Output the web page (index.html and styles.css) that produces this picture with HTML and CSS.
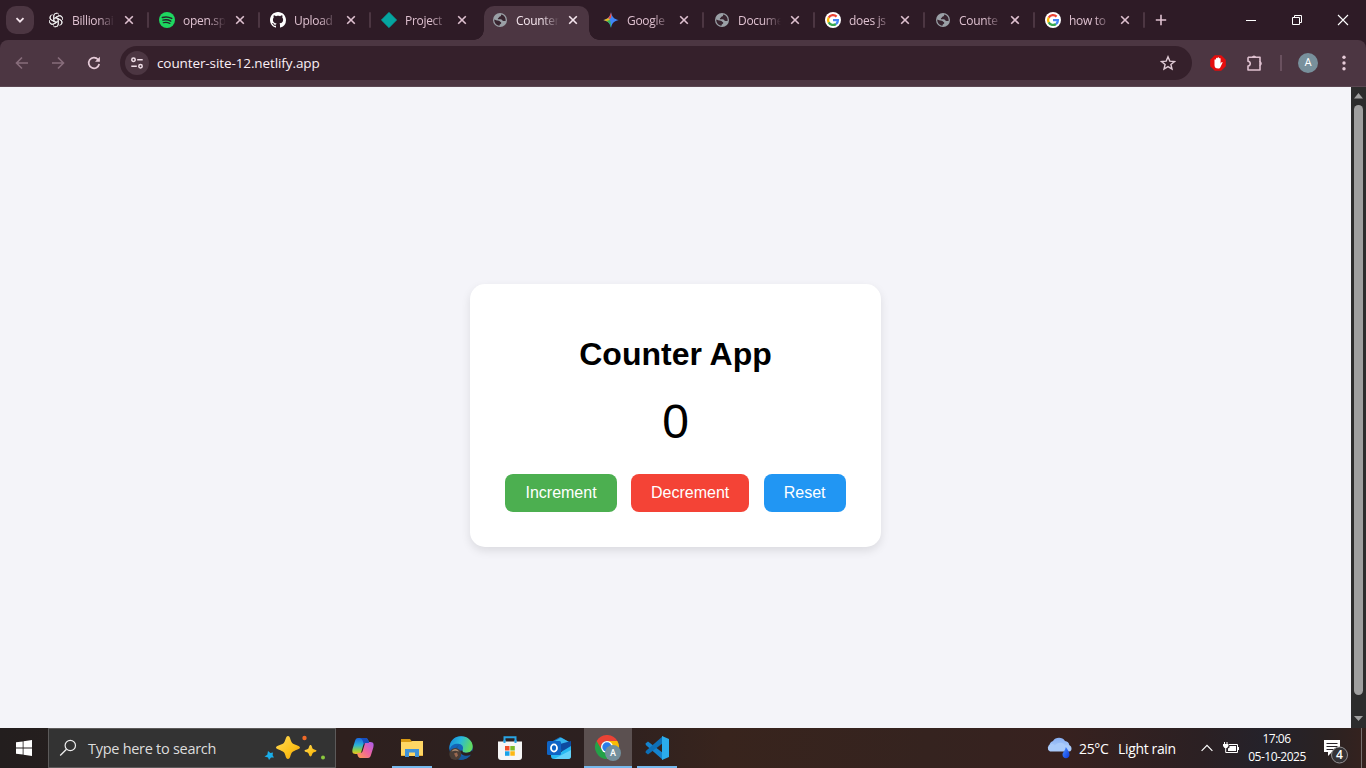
FILE: index.html
```html
<!DOCTYPE html>
<html lang="en">
<head>
<meta charset="utf-8">
<title>Counter App</title>
<link rel="stylesheet" href="styles.css">
</head>
<body>
<svg class="defs" width="0" height="0">
  <defs>
    <symbol id="globe" viewBox="0 0 16 16"><circle cx="8" cy="8" r="7" fill="#9aa0a6"/><path d="M2.300 7.600L5 8.400c1.200.2 2.300 0 2.800.9.400.9 1.600.7 1.500 1.700-.1.900-1.300.9-1.600 1.700-.2.500-.1.900-.4 1.100C4.400 13.400 2 11 2.300 7.600z" fill="#382530"/><path d="M9.200 2.600c-.2 1.200-.2 2-1.300 2-.9 0-.6 1.100-1.500 1.300-.8.200-.7 1.300.3 1.400 1.300.1 2.900-.2 3.400.8.400.9 1.500 1.300 3.500.8C14.100 6 12.200 3.200 9.200 2.600z" fill="#382530"/></symbol>
    <symbol id="google" viewBox="0 0 16 16"><circle cx="8" cy="8" r="8" fill="#fff"/><g fill="none" stroke-width="2.300"><path d="M11.600 4.600A5 5 0 0 0 3.700 5.600" stroke="#ea4335"/><path d="M3.700 5.500a5 5 0 0 0 0 5" stroke="#fbbc04"/><path d="M3.700 10.400a5 5 0 0 0 7.300 1.600" stroke="#34a853"/><path d="M8 8.200h4.900c0 1.800-.7 3-1.900 3.900" stroke="#4285f4"/></g></symbol>
    <symbol id="close" viewBox="0 0 10 10"><path d="M1.200 1.200l7.600 7.600M8.800 1.200L1.200 8.800" stroke="currentColor" stroke-width="1.600"/></symbol>
    <linearGradient id="cpA" x1="0" y1="0" x2="0" y2="1"><stop offset="0" stop-color="#1a67e0"/><stop offset=".45" stop-color="#2bb3d6"/><stop offset=".75" stop-color="#8bd04a"/><stop offset="1" stop-color="#f2c21b"/></linearGradient>
    <linearGradient id="cpB" x1="1" y1="0" x2="0" y2="1"><stop offset="0" stop-color="#a45df0"/><stop offset=".5" stop-color="#f0649e"/><stop offset="1" stop-color="#ffa04a"/></linearGradient>
    <linearGradient id="edge" x1="0" y1="0" x2="1" y2=".3"><stop offset="0" stop-color="#1686d9"/><stop offset=".5" stop-color="#28b8dc"/><stop offset="1" stop-color="#61da62"/></linearGradient>
    <linearGradient id="gold" x1="0" y1="0" x2="1" y2="1"><stop offset="0" stop-color="#ffd95a"/><stop offset=".6" stop-color="#fcc21b"/><stop offset="1" stop-color="#e89a10"/></linearGradient>
    <linearGradient id="cloud" x1="0" y1="0" x2="0" y2="1"><stop offset="0" stop-color="#86aef2"/><stop offset="1" stop-color="#b5d3fd"/></linearGradient>
    <linearGradient id="drop" x1="0" y1="0" x2="1" y2="1"><stop offset="0" stop-color="#4a92ff"/><stop offset="1" stop-color="#0a37e0"/></linearGradient>
  </defs>
</svg>

<div class="screen">
  <div class="tabstrip">
    <div class="tab-search"><svg width="10" height="10" viewBox="0 0 10 10"><path d="M1.500 3.200L5 6.700l3.500-3.500" fill="none" stroke="#f4e4ec" stroke-width="1.800"/></svg></div>
    <div class="tab"><svg class="fav" viewBox="0 0 16 16"><g fill="none" stroke="#eee" stroke-width=".9"><path id="petal" d="M5.700 9.300V4A3 3 0 0 1 11 2.400M7.200 5.900l3.700-2.200a3 3 0 0 1 3.600 2.100M6.900 7.200v-1L10.500 4"/><use href="#petal" transform="rotate(60 8 8)"/><use href="#petal" transform="rotate(120 8 8)"/><use href="#petal" transform="rotate(180 8 8)"/><use href="#petal" transform="rotate(240 8 8)"/><use href="#petal" transform="rotate(300 8 8)"/></g></svg><span class="title">Billionai</span><svg class="x"><use href="#close"/></svg><i class="sep"></i></div>
    <div class="tab"><svg class="fav" viewBox="0 0 16 16"><circle cx="8" cy="8" r="8" fill="#1ed760"/><g fill="none" stroke="#23242a" stroke-linecap="round"><path d="M3.400 5.500c3-.9 6.500-.6 9.300.9" stroke-width="1.600"/><path d="M3.900 8.200c2.600-.8 5.500-.5 7.900.9" stroke-width="1.300"/><path d="M4.200 10.700c2.300-.6 4.700-.4 6.700.8" stroke-width="1.100"/></g></svg><span class="title">open.sp</span><svg class="x"><use href="#close"/></svg><i class="sep"></i></div>
    <div class="tab"><svg class="fav" viewBox="0 0 16 16"><path fill="#fff" d="M8 0C3.580 0 0 3.580 0 8c0 3.540 2.290 6.530 5.470 7.590.4.070.55-.17.55-.38 0-.19-.01-.82-.01-1.490-2.010.37-2.530-.49-2.690-.94-.09-.23-.48-.94-.82-1.130-.28-.15-.68-.52-.01-.53.63-.01 1.080.58 1.230.82.72 1.210 1.870.87 2.330.66.07-.52.28-.87.51-1.070-1.780-.2-3.640-.89-3.640-3.950 0-.87.31-1.590.82-2.150-.08-.2-.36-1.020.08-2.120 0 0 .67-.21 2.200.82.64-.18 1.320-.27 2-.27s1.360.09 2 .27c1.530-1.040 2.200-.82 2.200-.82.44 1.100.16 1.920.08 2.120.51.56.82 1.270.82 2.150 0 3.070-1.870 3.750-3.650 3.950.29.25.54.73.54 1.480 0 1.070-.01 1.930-.01 2.200 0 .21.15.46.55.38A8.010 8.010 0 0 0 16 8c0-4.420-3.580-8-8-8z"/></svg><span class="title">Upload</span><svg class="x"><use href="#close"/></svg><i class="sep"></i></div>
    <div class="tab"><svg class="fav" viewBox="0 0 16 16"><path d="M8 .3L15.700 8 8 15.700.3 8z" fill="#05a5a0" stroke="#05a5a0" stroke-linejoin="round" stroke-width=".6"/></svg><span class="title">Project</span><svg class="x"><use href="#close"/></svg></div>
    <div class="tab active"><svg class="fav"><use href="#globe"/></svg><span class="title">Counter</span><svg class="x"><use href="#close"/></svg></div>
    <div class="tab"><svg class="fav" viewBox="0 0 16 16"><defs><clipPath id="star"><path d="M8 .2C9 5 11 7 15.800 8 11 9 9 11 8 15.800 7 11 5 9 .2 8 5 7 7 5 8 .2z"/></clipPath></defs><g clip-path="url(#star)"><path d="M0 0h16v16H0z" fill="#3f86f7"/><path d="M0 0h9L8 6 6 7z" fill="#f0503f"/><path d="M0 5l5 1 2 2-2 3-5-1z" fill="#f5bd16"/><path d="M3 9l4-1 1.500 8H3z" fill="#34b45b"/></g></svg><span class="title">Google</span><svg class="x"><use href="#close"/></svg><i class="sep"></i></div>
    <div class="tab"><svg class="fav"><use href="#globe"/></svg><span class="title">Docume</span><svg class="x"><use href="#close"/></svg><i class="sep"></i></div>
    <div class="tab narrow"><svg class="fav"><use href="#google"/></svg><span class="title">does js</span><svg class="x"><use href="#close"/></svg><i class="sep"></i></div>
    <div class="tab narrow"><svg class="fav"><use href="#globe"/></svg><span class="title">Counte</span><svg class="x"><use href="#close"/></svg><i class="sep"></i></div>
    <div class="tab narrow"><svg class="fav"><use href="#google"/></svg><span class="title">how to</span><svg class="x"><use href="#close"/></svg><i class="sep"></i></div>
    <svg class="newtab" viewBox="0 0 12 12"><path d="M6 .8v10.400M.8 6h10.400" stroke="#dfc1d0" stroke-width="1.600"/></svg>
    <div class="winctl">
      <svg width="12" height="12"><path d="M1 6.500h10" stroke="#fff"/></svg>
      <svg width="12" height="12"><path d="M1.500 3.500h7v7h-7zM3.500 3.500v-2h7v7h-2" fill="none" stroke="#fff"/></svg>
      <svg width="12" height="12"><path d="M1 1l10 10M11 1L1 11" stroke="#fff" stroke-width="1.100"/></svg>
    </div>
  </div>

  <div class="toolbar">
    <svg class="nav" viewBox="0 0 16 16"><path d="M14 8H3M8 2.500L2.500 8 8 13.500" fill="none" stroke="#876d7b" stroke-width="1.600"/></svg>
    <svg class="nav" viewBox="0 0 16 16"><path d="M2 8h11M8 2.500L13.500 8 8 13.500" fill="none" stroke="#876d7b" stroke-width="1.600"/></svg>
    <svg class="nav" viewBox="0 0 16 16"><path d="M13.200 9A5.300 5.300 0 1 1 12 4.500L13 5.600" fill="none" stroke="#e6cbd8" stroke-width="1.700"/><path d="M13.900 1.800v4.900H9z" fill="#e6cbd8"/></svg>
    <div class="omnibox">
      <div class="site"><svg width="14" height="14" viewBox="0 0 14 14" fill="none" stroke="#f0dfe8" stroke-width="1.500"><circle cx="3.500" cy="3.700" r="1.700"/><path d="M7.200 3.700h5.500M1.300 10.200h5.500"/><circle cx="10.500" cy="10.200" r="1.700"/></svg></div>
      <span class="url">counter-site-12.netlify.app</span>
      <svg class="bookmark" viewBox="0 0 16 16"><path d="M8 1.800l1.800 4.300 4.700.4-3.600 3 1.100 4.600L8 11.600l-4 2.500 1.100-4.600-3.600-3 4.700-.4z" fill="none" stroke="#e0cbd6" stroke-width="1.400"/></svg>
    </div>
    <svg class="block" viewBox="0 0 16 16"><path d="M4.800.2h6.400l4.600 4.600v6.400l-4.600 4.600H4.800L.2 11.200V4.800z" fill="#e40d0d"/><path d="M4.500 8V4.800c0-.9 1.500-.9 1.500 0V3.500c0-1 1.500-1 1.500 0V2.900c0-1 1.600-1 1.600 0v.8c0-.9 1.500-.9 1.500 0v5l.9-1.400c.5-.6 1.300-.2 1 .5l-2 4.200c-.5 1.100-1.200 1.500-2.300 1.500-2.500 0-3.700-1.300-3.700-3.300z" fill="#fff"/></svg>
    <svg class="puzzle" viewBox="0 0 18 18"><path d="M2 3.200h12v4.500M14 11.500V16H2v-4c3-.3 3-4.500 0-4.800V3.200" fill="none" stroke="#dfc1d0" stroke-width="1.600" stroke-linejoin="round"/><path d="M5.900 3a2.200 2.200 0 0 1 4.200 0zM14 7.300a2.300 2.300 0 0 1 0 4.500z" fill="#dfc1d0"/><path d="M14 7v5" stroke="#dfc1d0" stroke-width="1.600"/></svg>
    <i class="divider"></i>
    <div class="avatar">A</div>
    <svg class="more" viewBox="0 0 4 16"><g fill="#e6cbd8"><circle cx="2" cy="2.300" r="1.700"/><circle cx="2" cy="8" r="1.700"/><circle cx="2" cy="13.700" r="1.700"/></g></svg>
  </div>

  <div class="viewport">
    <main class="page">
      <div class="card">
        <h1>Counter App</h1>
        <div class="count">0</div>
        <button class="inc">Increment</button>
        <button class="dec">Decrement</button>
        <button class="reset">Reset</button>
      </div>
    </main>
    <div class="scrollbar">
      <svg width="15" height="18"><path d="M3 11.500L7.500 6l4.500 5.500z" fill="#9f9f9f"/></svg>
      <i class="thumb"></i>
      <svg width="15" height="18"><path d="M3 6h9L7.500 11z" fill="#9f9f9f"/></svg>
    </div>
  </div>

  <div class="taskbar">
    <div class="start"><svg width="16" height="16" viewBox="0 0 16 16"><path d="M0 2.300L6.700 1.400v6.200H0zM7.500 1.200L16 0v7.600H7.500zM0 8.400h6.700v6.200L0 13.700zM7.500 8.400H16V16l-8.500-1.200z" fill="#fff"/></svg></div>
    <div class="search">
      <svg width="18" height="18" viewBox="0 0 18 18"><circle cx="11.300" cy="6.500" r="5.200" fill="none" stroke="#eee" stroke-width="1.200"/><path d="M7.500 10.200L1.200 16.500" stroke="#eee" stroke-width="1.300"/></svg>
      <span>Type here to search</span>
      <svg class="sparkles" viewBox="0 0 62 26"><path d="M24 1c2.500 0 2.300 5 4.200 6.900S36 10.500 36 12.500s-5.800 2.700-7.800 4.700S26.500 24 24 24s-2.200-4.800-4.200-6.800-7.800-2.700-7.800-4.700 5.800-2.600 7.800-4.600S21.500 1 24 1z" fill="url(#gold)"/><path d="M46.500 10c1.500 0 1.300 2.700 2.300 3.700s3.700.8 3.700 2.100-2.700 1.200-3.700 2.200-.8 3.500-2.300 3.500-1.300-2.500-2.300-3.500-3.700-.9-3.700-2.200 2.700-1.100 3.700-2.100.8-3.700 2.300-3.700z" fill="url(#gold)"/><path d="M4 16l2.400 2 2.600-.6-.4 2.800 1.400 2.200-3 .2L5 25l-1-2.600-3.500-.8 2.800-1.800z" fill="#19aeea"/><circle cx="40.500" cy="3" r="2.200" fill="#f06a28"/><circle cx="59" cy="22.500" r="2" fill="#8bc83e"/></svg>
    </div>
    <div class="apps">
      <div class="app"><svg viewBox="0 0 24 24"><path d="M7 2h7.500c2 0 2.500 1.500 3 3l.5 2h-3c-2 0-2.500 1-3 3l-1.600 5.500C9.800 17.500 9 18 7 18H4.500C1 18 1 15 1.700 12.500L4 5c.6-2 1.400-3 3-3z" fill="url(#cpA)"/><path d="M17 22H9.500c-2 0-2.500-1.500-3-3L6 17h3c2 0 2.500-1 3-3l1.600-5.500C14.200 6.500 15 6 17 6h2.500c3.500 0 3.500 3 2.800 5.500L20 19c-.6 2-1.400 3-3 3z" fill="url(#cpB)"/><path d="M9 2h5.500c2 0 2.500 1.500 3 3l.5 2h-3c-1.300 0-2 .5-2.400 1.300C12 5 11.500 3 9 2z" fill="#174ebf"/></svg></div>
      <div class="app open"><svg viewBox="0 0 24 24"><path d="M1 3h9l1.500 2H23v3H1z" fill="#d99a13"/><path d="M1 6h10l1.500-1H23v15H1z" fill="#ffd664"/><path d="M5 21v-8h14v8h-4v-4.500H9V21z" fill="#3f92d9"/><path d="M1 19h4v1H1zM19 19h4v1h-4z" fill="#e9b33d"/></svg></div>
      <div class="app"><svg viewBox="0 0 24 24"><circle cx="12" cy="12" r="11.700" fill="#1464b8"/><path d="M.5 11C1.500 4 6 .3 12 .3c7 0 11.700 5 11.700 10 0 4.500-3 6.500-6.500 6.500-2.600 0-4.500-1-3.800-2.300 1.500-2.500.5-6-3-6.500C6 7.300 1.700 9 .5 14z" fill="url(#edge)"/><path d="M10 9c-4 4-1 11 5 11 3 0 5-.8 7-2-1 3-5 5.700-10 5.700C5 22.500 3 12 10 9z" fill="#155b9d"/><path d="M13.700 14.500c-.7 1.300 1.200 2.300 3.800 2.300 2.500 0 4.500-1 5.500-2.500l.8 3.500-2 1c-5 2.500-11 0-10.800-4z" fill="#2b2020"/><circle cx="6.300" cy="18" r="6" fill="#493d36"/><path d="M2.500 15.500C4 12 8.500 12 10 15.500c-3-1-4.500-1-7.500 0z" fill="#a9886e"/><path d="M5 17.500l3-1 1 3-2 2z" fill="#9b6a51"/></svg></div>
      <div class="app"><svg viewBox="0 0 24 24"><path d="M6.500 6.500V1.300h11v5.200" fill="none" stroke="#29a4e4" stroke-width="2"/><path d="M0 5.500h24V21c0 2-1 3-3 3H3c-2 0-3-1-3-3z" fill="#f6f6f6"/><path d="M6.500 4v3M17.500 4v3" stroke="#29a4e4" stroke-width="2"/><path d="M7 10h4.500v4.500H7z" fill="#ef4f29"/><path d="M12.300 10h4.500v4.500h-4.500z" fill="#7dba27"/><path d="M7 15.300h4.500v4.500H7z" fill="#18a3ea"/><path d="M12.300 15.300h4.500v4.500h-4.500z" fill="#fdb813"/></svg></div>
      <div class="app"><svg viewBox="0 0 24 24"><path d="M4 6l9-5 11 6v3L12 16z" fill="#1673c5"/><path d="M8 5l6-3.500L22 6l-9 7z" fill="#35b5ee"/><path d="M13 8l11-3v8l-9 4z" fill="#0e4ba0"/><path d="M4 13l10 3 10-6v10c0 2-1 3-3 3H7c-2 0-3-1-3-3z" fill="#27b8f0"/><path d="M7 23l17-9v6c0 2-1 3-3 3z" fill="#63d1f8"/><rect y="5" width="14" height="14" rx="1.500" fill="#0f64c5"/><ellipse cx="7" cy="12" rx="3" ry="3.600" fill="none" stroke="#fff" stroke-width="1.800"/></svg></div>
      <div class="app current"><svg viewBox="0 0 28 26"><path d="M13 12L2.600 6a12 12 0 0 0 10.400 18l5.200-9z" fill="#24a148"/><path d="M13 6h10.400A12 12 0 0 1 13 24l5.200-9z" fill="#fbbc04"/><path d="M2.600 6A12 12 0 0 1 23.400 6H13a6 6 0 0 0-5.200 9z" fill="#ea4335"/><circle cx="13" cy="12" r="6" fill="#fff"/><circle cx="13" cy="12" r="4.700" fill="#2b7de9"/><circle cx="19" cy="18" r="8" fill="#73909d"/><text x="19" y="21.400" class="badge-letter">A</text></svg></div>
      <div class="app open"><svg viewBox="0 0 24 24"><path d="M.5 7.500l2.500-2L18 17v7L.8 9z" fill="#1584cf"/><path d="M.5 16.500l2.500 2L18 7V0L.8 15z" fill="#0d70b8"/><path d="M17 0l7 3v18l-7 3z" fill="#2bacec"/></svg></div>
    </div>
    <div class="weather">
      <svg width="26" height="24" viewBox="0 0 26 24"><path d="M5.500 14.500a5 5 0 0 1 .5-9.400 7 7 0 0 1 12-.1 5 5 0 0 1 1.500 9.500z" fill="url(#cloud)"/><path d="M3 15.500a4 4 0 0 1 1-7.500c2-.4 3 .4 4 1.500 2.500-4 9-3.500 10 0 4-1.500 6.500 0 6.500 3s-2 3-3 3z" fill="#a9cafa"/><path d="M18.800 11c2 3 3.700 5 3.700 7.500 0 5-7 5-7 0 0-1.500 3-4.500 3.300-7.500z" fill="url(#drop)"/></svg>
      <span class="temp">25°C</span><span class="cond">Light rain</span>
    </div>
    <svg class="chev" viewBox="0 0 12 8"><path d="M.6 6.800L6 1.400l5.400 5.400" fill="none" stroke="#fff" stroke-width="1.200"/></svg>
    <svg class="battery" viewBox="0 0 16 12"><path d="M6 2.500h8.500v8H5" fill="none" stroke="#fff"/><path d="M6.500 4h6.500v5H5V6.500l1.500-1zM15 5h1v3h-1zM0 2h5.500v2L4 6H1.500L0 4zM1 0h1v2H1zM3.500 0h1v2h-1z" fill="#fff"/><path d="M2.700 6v4.500H5" fill="none" stroke="#fff"/></svg>
    <div class="clock"><span class="time">17:06</span><span>05-10-2025</span></div>
    <div class="notify"><svg width="26" height="26" viewBox="0 0 26 26"><path d="M1 1h16v12H9l-4 4v-4H1z" fill="#fff"/><path d="M3.500 4.500h11M3.500 7.500h11M3.500 10.500h7" stroke="#29242a"/><circle cx="16.500" cy="16" r="8" fill="#353336" stroke="#929092"/><text x="16.500" y="20" class="count-badge">4</text></svg></div>
    <i class="peek"></i>
  </div>
</div>
</body>
</html>
```
FILE: styles.css
```css
* { box-sizing: border-box; }
body { margin: 0; overflow: hidden; font-family: "Open Sans", "Noto Sans", sans-serif; }
svg { display: block; flex: none; }
.defs { position: absolute; }
.screen { width: 1366px; height: 768px; display: flex; flex-direction: column; background: #2e1b26; }

.tabstrip { height: 40px; flex: none; display: flex; align-items: center; padding-left: 6px; }
.tab-search { width: 28px; height: 28px; margin-right: 4px; border-radius: 10px; background: #4c3642; display: grid; place-items: center; flex: none; }
.tab { width: 111px; height: 40px; flex: none; display: flex; align-items: center; padding-left: 10px; color: #dfc1d0; font-size: 12px; position: relative; }
.tab.narrow { width: 110px; }
.fav { width: 16px; height: 16px; margin-right: 8px; }
.title { width: 43px; flex: none; white-space: nowrap; line-height: 20px; padding-top: 1px; letter-spacing: -.3px; -webkit-mask-image: linear-gradient(90deg, #000 60%, transparent 100%); mask-image: linear-gradient(90deg, #000 60%, transparent 100%); }
.x { width: 10px; height: 10px; margin-left: 9px; }
.narrow .x { margin-left: 8px; }
.sep { width: 2px; height: 16px; margin-left: auto; background: #4c3642; border-radius: 1px; }
.tab.active { color: #f5e6ee; z-index: 0; }
.tab.active::before { content: ""; position: absolute; z-index: -1; left: 2px; right: 4px; top: 6px; bottom: 0; border-radius: 10px 10px 0 0; background: #4c3642; }
.tab.active::after { content: ""; position: absolute; z-index: -1; left: -8px; right: -6px; bottom: 0; height: 10px; background: radial-gradient(circle at 0 0, transparent 9.500px, #4c3642 10px) left / 10px 10px no-repeat, radial-gradient(circle at 100% 0, transparent 9.500px, #4c3642 10px) right / 10px 10px no-repeat; }
.newtab { width: 12px; height: 12px; margin-left: 10px; }
.winctl { margin-left: auto; padding-right: 17px; display: flex; gap: 34px; }

.toolbar { height: 47px; flex: none; display: flex; align-items: center; padding: 0 20px 1px 14px; background: #4c3642; border-bottom: 1px solid #5b4752; border-radius: 8px 8px 0 0; }
.nav { width: 16px; height: 16px; margin-right: 20px; }
.nav:nth-child(3) { margin-right: 18px; }
.omnibox { width: 1072px; height: 34px; flex: none; border-radius: 17px; background: #35202b; display: flex; align-items: center; padding: 0 16px 0 5px; }
.site { width: 24px; height: 24px; border-radius: 50%; background: #4c3642; display: grid; place-items: center; margin-right: 8px; }
.url { font-size: 13.500px; color: #fbeff5; white-space: nowrap; letter-spacing: -.1px; }
.bookmark { width: 16px; height: 16px; margin-left: auto; }
.block { width: 16px; height: 16px; margin-left: 18px; }
.puzzle { width: 18px; height: 18px; margin-left: 20px; }
.divider { width: 2px; height: 16px; margin-left: 16px; background: #6a515f; }
.avatar { width: 20px; height: 20px; margin-left: 16px; border-radius: 50%; background: #78909c; color: #fff; display: grid; place-items: center; font: 400 11px/20px Roboto, sans-serif; }
.more { width: 4px; height: 16px; margin-left: auto; }

.viewport { flex: 1; display: flex; background: #f4f4f9; min-height: 0; overflow: hidden; }
.page { flex: 1; margin-top: 8px; height: 641px; display: flex; justify-content: center; align-items: center; font-family: "Liberation Sans", Arial, sans-serif; color: #000; }
.card { padding: 30px; border-radius: 15px; background: #fff; text-align: center; box-shadow: 0 4px 10px rgba(0, 0, 0, .1); }
.card h1 { font-size: 32px; margin: 21.440px 0; }
.count { font-size: 48px; margin: 20px 0; }
.card button { margin: 5px; padding: 10px 20px; border: 0; border-radius: 8px; font: 16px "Liberation Sans", Arial, sans-serif; color: #fff; }
.inc { background: #4caf50; }
.dec { background: #f44336; }
.reset { background: #2196f3; }
.scrollbar { width: 15px; flex: none; background: #2c2c2c; display: flex; flex-direction: column; align-items: center; }
.thumb { width: 9px; height: 590px; margin-bottom: 15px; border-radius: 5px; background: #9f9f9f; flex: none; }

.taskbar { height: 40px; flex: none; display: flex; align-items: center; color: #fff; background: linear-gradient(90deg, #231e1e 0, #2e201e 25%, #2c2020 43%, #38241d 53%, #35231f 68%, #37211f 78%, #2b2023 88%, #24222b 93%, #2a2222 97%, #35221e 100%); }
.start { width: 48px; flex: none; display: grid; place-items: center; }
.search { width: 288px; height: 40px; flex: none; display: flex; align-items: center; padding: 0 9px 0 10px; background: #333; border: 1px solid #5c5a5a; font-size: 14.500px; letter-spacing: -.28px; color: #ddd; white-space: nowrap; }
.search span { margin-left: 11px; }
.sparkles { width: 62px; height: 26px; margin-left: auto; }
.apps { display: flex; gap: 1px; margin-left: 3px; flex: none; }
.app { width: 48px; height: 40px; display: grid; place-items: center; }
.app > svg { width: 24px; height: 24px; }
.app.open { background: linear-gradient(#76b9ed, #76b9ed) center bottom / 40px 2px no-repeat; }
.app.current { background: linear-gradient(#76b9ed, #76b9ed) center bottom / 100% 2px no-repeat #5b5050; }
.app.current > svg { width: 28px; height: 26px; }
.badge-letter { font: 500 9px Roboto, sans-serif; fill: #fff; text-anchor: middle; }
.weather { display: flex; align-items: center; margin-left: 366px; width: 130px; flex: none; font-size: 14px; white-space: nowrap; letter-spacing: -.35px; }
.temp { width: 30px; margin-left: 6px; }
.cond { margin-left: 9px; }
.chev { width: 12px; height: 8px; margin-left: 24px; }
.battery { width: 16px; height: 12px; margin-left: 10px; }
.clock { width: 60px; margin-left: 8px; flex: none; display: flex; flex-direction: column; align-items: center; font-size: 12px; line-height: 18px; letter-spacing: -.5px; white-space: nowrap; }
.time { margin-left: -1px; }
.notify { margin-left: 16px; padding-top: 7px; }
.count-badge { font: 600 12px "Open Sans", sans-serif; fill: #fff; text-anchor: middle; }
.peek { width: 1px; height: 40px; margin-left: auto; margin-right: 4px; background: #77706f; }
```
